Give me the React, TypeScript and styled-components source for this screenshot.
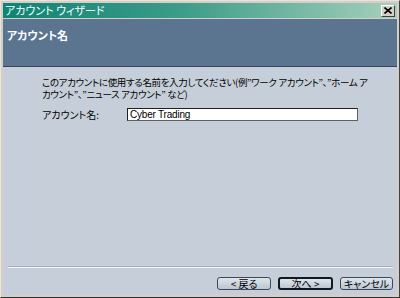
import React from "react";
import styled, { createGlobalStyle } from "styled-components";

const Global = createGlobalStyle`
  html, body { margin: 0; padding: 0; background: #d4d0c8; }
  body { font-family: "Noto Sans CJK JP", "Noto Sans", sans-serif; }
`;

const Window = styled.div`
  width: 400px;
  height: 298px;
  box-sizing: border-box;
  border: 1px solid;
  border-color: #e8e4dc #404040 #303030 #e8e4dc;
  background: #d4d0c8;
  padding: 2px;
  display: flex;
  flex-direction: column;
  gap: 1px;
`;

const TitleBar = styled.div`
  height: 15px;
  flex: none;
  display: flex;
  align-items: center;
  justify-content: space-between;
  padding: 0 2px 0 2px;
  background: linear-gradient(to right, #0e8474 0%, #3c9c88 45%, #a6d0bc 100%);
`;

const TitleText = styled.span`
  color: #fff;
  font-size: 11px;
  line-height: 15px;
  font-feature-settings: "palt";
`;

const CloseButton = styled.div`
  width: 14px;
  height: 12px;
  box-sizing: border-box;
  background: #d4d0c8;
  border: 1px solid;
  border-color: #fff #404040 #404040 #fff;
  display: flex;
  align-items: center;
  justify-content: center;
`;

const Header = styled.div`
  height: 48px;
  flex: none;
  background: #5b7591;
  border-bottom: 1px solid #34465a;
  padding: 9px 0 0 4px;
  box-sizing: border-box;
`;

const HeaderTitle = styled.div`
  color: #fff;
  font-weight: bold;
  font-size: 11px;
  line-height: 14px;
  font-feature-settings: "palt";
`;

const Body = styled.div`
  flex: 1;
  margin-top: -1px;
  background: #c6cfd9;
  display: flex;
  flex-direction: column;
`;

const Content = styled.div`
  flex: 1;
  padding: 9px 0 0 39px;
`;

const Paragraph = styled.p`
  margin: 0;
  font-size: 9.5px;
  line-height: 12px;
  color: #000;
  white-space: nowrap;
  font-feature-settings: "palt";
  letter-spacing: -0.35px;
`;

const Field = styled.div`
  display: flex;
  align-items: center;
  margin-top: 8px;
`;

const Label = styled.label`
  width: 85px;
  font-size: 10px;
  line-height: 13px;
  color: #000;
  font-feature-settings: "palt";
`;

const Input = styled.div`
  width: 231px;
  height: 13px;
  box-sizing: border-box;
  background: #fff;
  border: 1px solid;
  border-color: #202020 #606060 #606060 #202020;
  font-family: "Liberation Sans", Arial, sans-serif;
  font-size: 10px;
  line-height: 11px;
  padding-left: 2px;
  color: #000;
  letter-spacing: -0.2px;
`;

const Separator = styled.div`
  height: 1px;
  margin: 0 4px 0 5px;
  background: #a7afb8;
  border-bottom: 1px solid #f2f4f6;
`;

const ButtonRow = styled.div`
  display: flex;
  justify-content: flex-end;
  gap: 7px;
  padding: 9px 4px 5px 0;
`;

const Button = styled.div<{ $w: number; $default?: boolean }>`
  width: ${(p) => p.$w}px;
  height: 13px;
  box-sizing: border-box;
  border: ${(p) => (p.$default ? "2px solid #101820" : "1px solid #3c4a58")};
  border-radius: 3px;
  background: linear-gradient(#dfe5ec, #bcc6d1);
  display: flex;
  align-items: center;
  justify-content: center;
  font-size: 10px;
  line-height: 11px;
  color: #000;
  font-feature-settings: "palt";
  white-space: nowrap;
`;

export default function App() {
  return (
    <>
      <Global />
      <Window>
        <TitleBar>
          <TitleText>アカウント ウィザード</TitleText>
          <CloseButton>
            <svg width="8" height="7" viewBox="0 0 8 7">
              <path d="M0.5 0.5 L7.5 6.5 M7.5 0.5 L0.5 6.5" stroke="#000" strokeWidth="1.6" />
            </svg>
          </CloseButton>
        </TitleBar>
        <Header>
          <HeaderTitle>アカウント名</HeaderTitle>
        </Header>
        <Body>
          <Content>
            <Paragraph>
              このアカウントに使用する名前を入力してください(例”ワーク アカウント”、”ホーム ア
              <br />
              カウント”、”ニュース アカウント” など)
            </Paragraph>
            <Field>
              <Label>アカウント名:</Label>
              <Input>Cyber Trading</Input>
            </Field>
          </Content>
          <Separator />
          <ButtonRow>
            <Button $w={54}>&lt; 戻る</Button>
            <Button $w={55} $default>次へ &gt;</Button>
            <Button $w={53}>キャンセル</Button>
          </ButtonRow>
        </Body>
      </Window>
    </>
  );
}
